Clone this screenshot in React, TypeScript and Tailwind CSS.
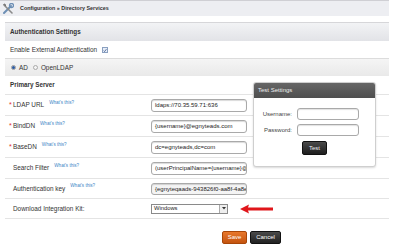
import React from "react";

const font = { fontFamily: '"Liberation Sans", Arial, sans-serif' };

function Help() {
  return <span className="ml-[5px] relative top-[-2px] text-[4.6px] text-[#3d85c6]">What's this?</span>;
}

function Row({ label, req, help = true, value }: { label: string; req?: boolean; help?: boolean; value: string }) {
  return (
    <div className="flex items-center h-[21px] border-b border-[#e4e4e4]">
      <div className="w-[146px] flex items-center pl-[4px] text-[6.4px] text-[#333]">
        <span className="w-[4px] text-[#e03030] text-[7px]">{req ? "*" : ""}</span>
        <span>{label}</span>
        {help && <Help />}
      </div>
      <div className="w-[96px] h-[13px] border border-[#a9a9a9] rounded-[3px] bg-white shadow-[inset_0_1px_1px_rgba(0,0,0,0.15)] px-[3px] text-[6px] text-[#222] leading-[11px] overflow-hidden whitespace-nowrap">
        {value}
      </div>
    </div>
  );
}

export default function App() {
  return (
    <div className="w-[400px] h-[249px] bg-white relative overflow-hidden" style={font}>
      {/* header */}
      <div className="w-[389px] h-[16px] bg-[#edeef2] border-t border-[#cfcfd4] flex items-center">
        <svg width="12" height="12" viewBox="0 0 12 12" className="ml-[2px]">
          <path d="M2 10 L9 3" stroke="#6d8fb5" strokeWidth="2" strokeLinecap="round" />
          <circle cx="9.5" cy="2.5" r="2" fill="none" stroke="#6d8fb5" strokeWidth="1.3" />
          <path d="M2 2 L10 10" stroke="#8a8a8a" strokeWidth="1.6" strokeLinecap="round" />
          <path d="M1.5 1.5 L3 1 L3.5 3" stroke="#666" strokeWidth="1" fill="none" />
        </svg>
        <span className="ml-[6px] text-[5.4px] font-bold text-[#333]">Configuration » Directory Services</span>
      </div>

      <div className="ml-[5px] w-[384px]">
        {/* Authentication settings bar */}
        <div className="mt-[6px] h-[19px] bg-gradient-to-b from-[#f2f3f5] to-[#e2e3e7] border-t border-[#d6d6d9] flex items-center pl-[5px]">
          <span className="text-[6.3px] font-bold text-[#333]">Authentication Settings</span>
        </div>
        <div className="h-[18px] flex items-center pl-[5px] pt-[1px] border-b border-[#dcdcdc]">
          <span className="text-[6.4px] text-[#333]">Enable External Authentication</span>
          <span className="ml-[5px] w-[6px] h-[6px] border border-[#8aa0c0] bg-[#e8eef8] flex items-center justify-center">
            <svg width="5" height="5" viewBox="0 0 5 5"><path d="M0.8 2.6 L2 3.8 L4.3 0.8" stroke="#2a4a80" strokeWidth="0.9" fill="none" /></svg>
          </span>
        </div>
        <div className="h-[17px] bg-gradient-to-b from-[#f5f5f5] to-[#e9e9e9] flex items-center pl-[6px] text-[6.4px] text-[#333]">
          <span className="w-[5px] h-[5px] rounded-full border border-[#999] bg-white flex items-center justify-center">
            <span className="w-[3px] h-[3px] rounded-full bg-[#2c5aa0]" />
          </span>
          <span className="ml-[3px]">AD</span>
          <span className="ml-[5px] w-[5px] h-[5px] rounded-full border border-[#aaa] bg-[#f4f4f4]" />
          <span className="ml-[3px]">OpenLDAP</span>
        </div>
        <div className="h-[19px] flex items-center pl-[5px] border-b border-[#e4e4e4]">
          <span className="text-[6.3px] font-bold text-[#333]">Primary Server</span>
        </div>
        <Row label="LDAP URL" req value="ldaps://70.35.59.71:636" />
        <Row label="BindDN" req value="{username}@egnyteads.com" />
        <Row label="BaseDN" req value="dc=egnyteads,dc=com" />
        <Row label="Search Filter" value="(userPrincipalName={username}@eg" />
        <div className="flex items-center h-[20px] border-b border-[#e4e4e4]">
          <div className="w-[146px] flex items-center pl-[8px] text-[6.4px] text-[#333]">
            <span>Authentication key</span>
            <Help />
          </div>
          <div className="w-[96px] h-[12px] border border-[#a9a9a9] rounded-[3px] bg-[#f4f4f4] shadow-[inset_0_1px_1px_rgba(0,0,0,0.15)] px-[3px] text-[6px] text-[#222] leading-[10px] overflow-hidden whitespace-nowrap">
            {"{egnyteqaads-943826f0-aa8f-4a8e-8f"}
          </div>
        </div>
        <div className="flex items-center h-[20px] border-b border-[#e4e4e4]">
          <div className="w-[146px] pl-[8px] text-[6.4px] text-[#333]">Download Integration Kit:</div>
          <div className="w-[77px] h-[10px] border border-[#8a8a8a] bg-white flex items-center justify-between text-[5.8px] text-[#222]">
            <span className="pl-[2px]">Windows</span>
            <span className="w-[8px] h-[8px] border-l border-[#aaa] bg-[#eee] flex items-center justify-center">
              <svg width="4" height="3" viewBox="0 0 4 3"><path d="M0 0 L4 0 L2 2.5 Z" fill="#333" /></svg>
            </span>
          </div>
          <svg width="34" height="10" viewBox="0 0 34 10" className="ml-[12px]">
            <path d="M0 5 L9 0.5 L8 3.5 L33 3.5 L33 6.5 L8 6.5 L9 9.5 Z" fill="#e0161b" />
          </svg>
        </div>
        <div className="flex mt-[12px] ml-[217px] gap-[3px]">
          <div className="w-[25px] h-[13px] rounded-[2px] bg-gradient-to-b from-[#e8782c] to-[#c4540e] border border-[#a84608] text-[6px] text-white flex items-center justify-center">Save</div>
          <div className="w-[31px] h-[13px] rounded-[2px] bg-gradient-to-b from-[#4a4a4a] to-[#222] border border-[#111] text-[6px] text-white flex items-center justify-center">Cancel</div>
        </div>
      </div>

      {/* Test settings popup */}
      <div className="absolute left-[253px] top-[82px] w-[123px] h-[85px] rounded-[3px] border border-[#cfcfcf] bg-white shadow-[0_1px_2px_rgba(0,0,0,0.15)] overflow-hidden">
        <div className="h-[15px] bg-gradient-to-b from-[#666] to-[#4e4e4e] flex items-center pl-[4px]">
          <span className="text-[6px] text-[#eee]">Test Settings</span>
        </div>
        <div className="mt-[10px] flex items-center">
          <span className="w-[38px] text-right text-[6px] text-[#444]">Username:</span>
          <span className="ml-[5px] w-[62px] h-[12px] border border-[#a9a9a9] rounded-[3px] shadow-[inset_0_1px_1px_rgba(0,0,0,0.12)]" />
        </div>
        <div className="mt-[4px] flex items-center">
          <span className="w-[38px] text-right text-[6px] text-[#444]">Password:</span>
          <span className="ml-[5px] w-[62px] h-[12px] border border-[#a9a9a9] rounded-[3px] shadow-[inset_0_1px_1px_rgba(0,0,0,0.12)]" />
        </div>
        <div className="mt-[5px] ml-[48px] w-[25px] h-[14px] rounded-[2px] bg-gradient-to-b from-[#4a4a4a] to-[#1e1e1e] border border-[#111] flex items-center justify-center text-[6px] text-[#eee]">Test</div>
      </div>
    </div>
  );
}
